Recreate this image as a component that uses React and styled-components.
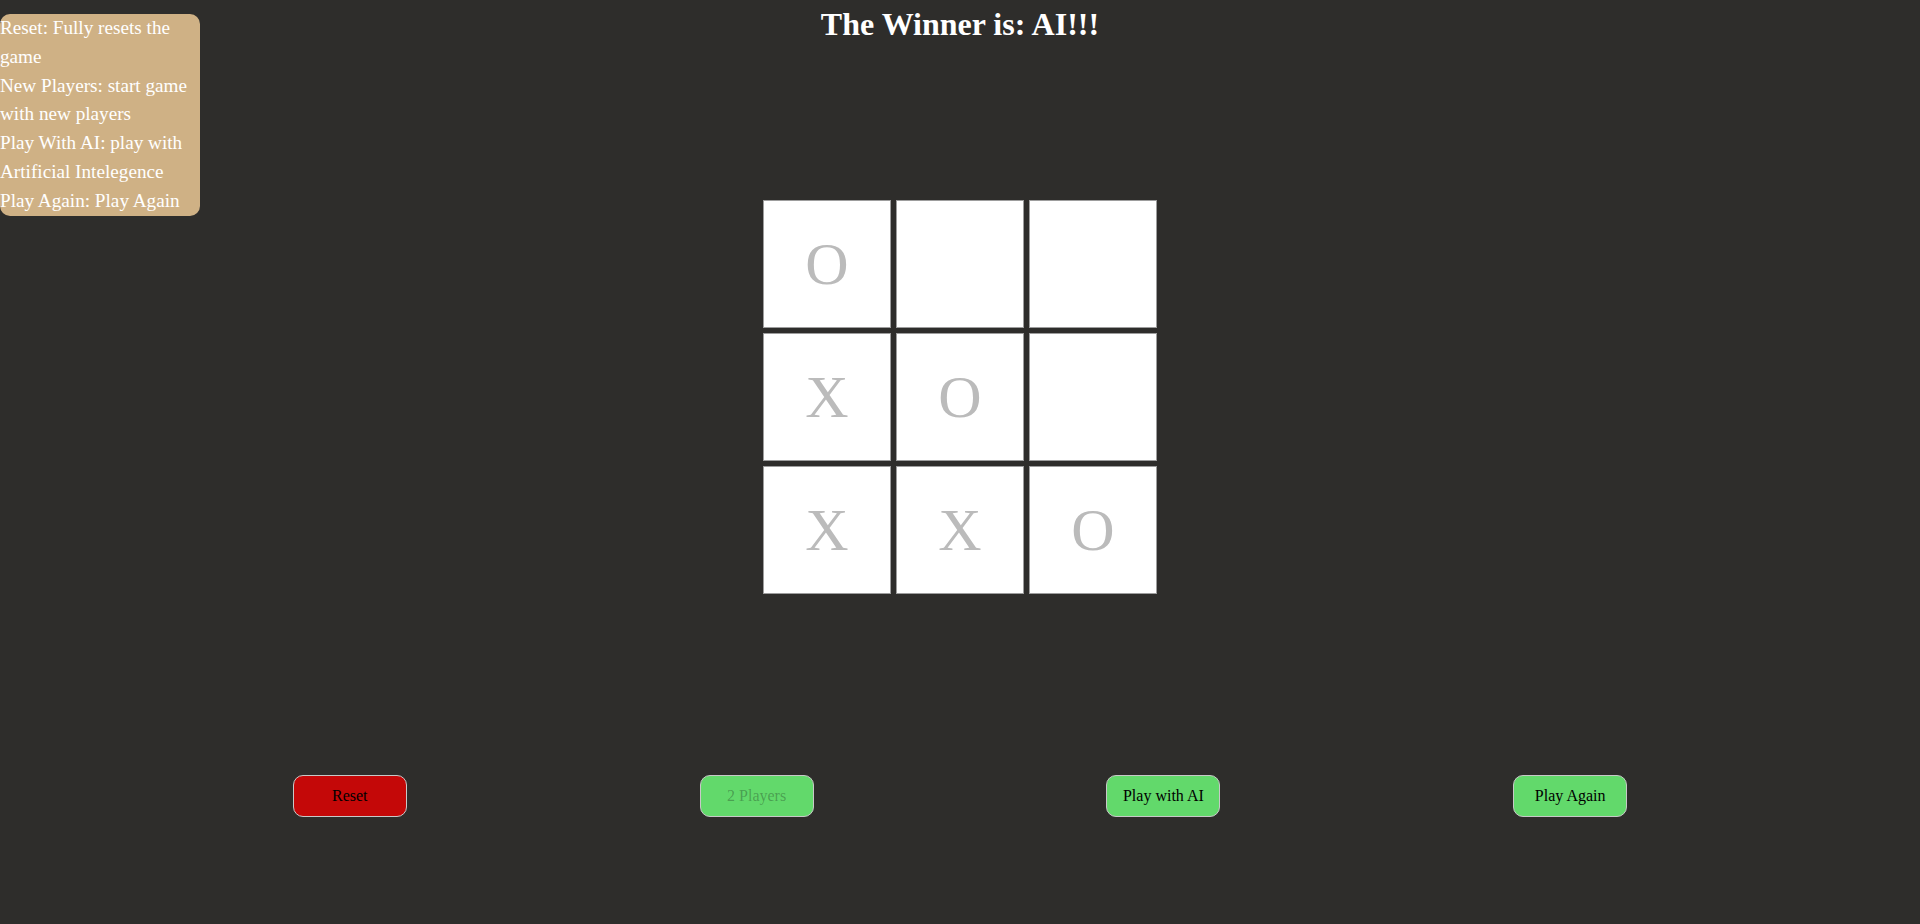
import React from 'react'
import styled, { createGlobalStyle } from 'styled-components'

const GlobalStyle = createGlobalStyle`
    html, body {
        margin: 0;
        padding: 0;
        background-color: #2e2d2b;
        font-family: 'Liberation Serif', 'Times New Roman', serif;
    }
`;

const Page = styled.div`
    position: relative;
    width: 100%;
    min-height: 924px;
    display: flex;
    flex-direction: column;
    align-items: center;
`;

const InfoPanel = styled.div`
    position: absolute;
    top: 14px;
    left: 0;
    width: 200px;
    background-color: #cfb185;
    border-radius: 10px;
    color: #fff;
    font-size: 19.2px;
    line-height: 28.8px;
`;

const Title = styled.h1`
    margin: 7px 0 0;
    font-size: 32px;
    line-height: 35px;
    font-weight: bold;
    color: #fff;
`;

const Board = styled.div`
    margin-top: 158px;
    display: grid;
    grid-template-columns: repeat(3, 128px);
    grid-auto-rows: 128px;
    gap: 5px;
`;

const Cell = styled.div`
    box-sizing: border-box;
    background-color: #fff;
    border: 1px solid #9d9d9d;
    display: flex;
    align-items: center;
    justify-content: center;
    font-size: 60px;
    color: #bbbbbb;
`;

const ButtonRow = styled.div`
    margin-top: 181px;
    width: 100%;
    display: flex;
    justify-content: space-evenly;
`;

const Button = styled.button`
    box-sizing: border-box;
    width: 114px;
    height: 42px;
    border: 1px solid #c8c8c8;
    border-radius: 10px;
    background-color: ${p => p.$danger ? '#c40808' : '#62d96b'};
    color: #000;
    font-family: 'Liberation Serif', 'Times New Roman', serif;
    font-size: 16px;
    padding: 0;
    cursor: pointer;

    &:disabled {
        color: rgba(16, 16, 16, 0.3);
        cursor: default;
    }
`;

const board = ['O', '', '', 'X', 'O', '', 'X', 'X', 'O'];

const App = () => {
    return (
        <Page>
            <GlobalStyle />
            <InfoPanel>
                Reset: Fully resets the game<br />
                New Players: start game with new players<br />
                Play With AI: play with Artificial Intelegence<br />
                Play Again: Play Again
            </InfoPanel>
            <Title>The Winner is: AI!!!</Title>
            <Board>
                {board.map((v, i) => (
                    <Cell key={i}>{v}</Cell>
                ))}
            </Board>
            <ButtonRow>
                <Button $danger>Reset</Button>
                <Button disabled>2 Players</Button>
                <Button>Play with AI</Button>
                <Button>Play Again</Button>
            </ButtonRow>
        </Page>
    )
}

export default App
